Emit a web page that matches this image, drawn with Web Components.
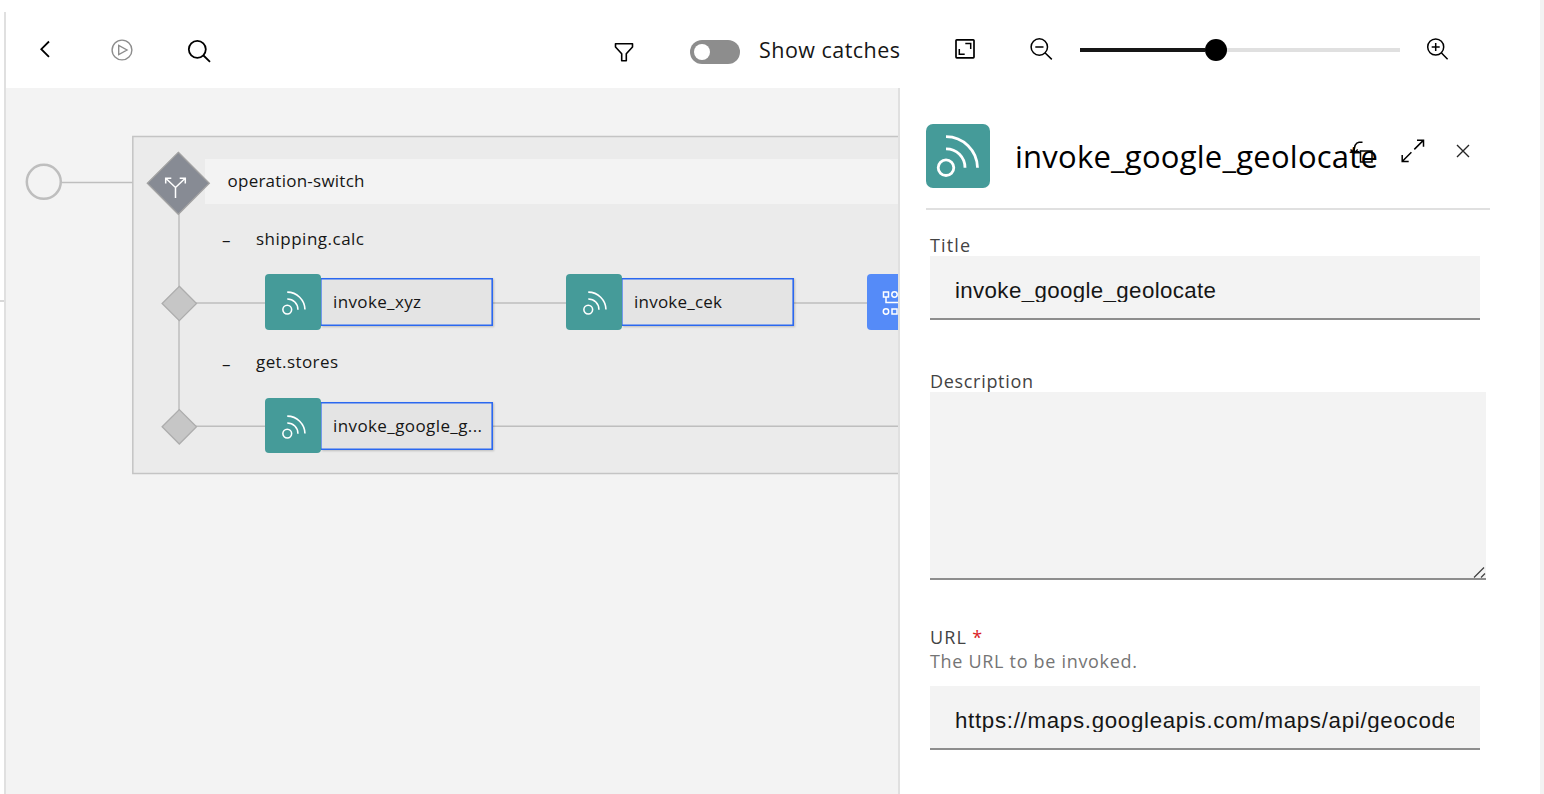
<!DOCTYPE html>
<html lang="en">
<head>
<meta charset="utf-8">
<title>Assembly editor</title>
<style>
html,body{margin:0;height:100%;background:#fff;overflow:hidden}
body{font-family:"Open Sans","Noto Sans",sans-serif;color:#161616}
</style>
</head>
<body>
<flow-editor></flow-editor>
<script>
function define(name, html, init) {
  const tpl = document.createElement('template');
  tpl.innerHTML = html;
  customElements.define(name, class extends HTMLElement {
    connectedCallback() {
      if (this.shadowRoot) return;
      this.attachShadow({ mode: 'open' }).append(tpl.content.cloneNode(true));
      if (init) init.call(this, this.shadowRoot);
    }
  });
}

// One line of text tracked so that it spans exactly `span` pixels.
define('ui-text', `<style>:host{display:block;white-space:pre}span{display:inline-block}</style><span></span>`, function (root) {
  const s = root.querySelector('span'), text = this.getAttribute('text');
  s.textContent = text;
  const target = +this.getAttribute('span');
  if (target) s.style.letterSpacing = ((target - s.getBoundingClientRect().width) / (text.length - 1)).toFixed(3) + 'px';
});

const ICONS = {
  back: ['29 34 32 32', '<path d="M49 41.5 41.3 49.2 49 56.900"/>', 1.8],
  play: ['106 34 32 32', '<circle cx="122" cy="50" r="9.900"/><path d="M118.700 45.400v9.200l8.300-4.600z"/>', 1.4],
  search: ['183 34 32 32', '<circle cx="197.300" cy="49.300" r="8.500"/><path d="M203.500 55.500l6.500 6.300"/>', 1.8],
  filter: ['608 34 32 32', '<path d="M615.500 43.700h17v3.300l-6.200 6.700v7h-4.600v-7l-6.200-6.700z" stroke-linejoin="round"/>', 1.6],
  fit: ['949 34 32 32', '<rect x="956" y="39.800" width="18" height="18" rx=".8"/><path d="M965.300 43.500h5.400v5.600M959.300 49v5.200h5.400" stroke-width="1.500"/>', 1.7],
  zoomout: ['1025 34 32 32', '<circle cx="1039.300" cy="47" r="8.200"/><path d="M1045.200 53l6.600 6.400M1035.300 47h8.200"/>', 1.5],
  zoomin: ['1421 34 32 32', '<circle cx="1435.700" cy="47" r="8"/><path d="M1441.500 53l6.100 6.200M1431.700 47h8M1435.700 43v8"/>', 1.5],
  copy: ['1346 135 32 32', '<path d="M1362.500 142.200h-3.500q-5 .5-4.800 10.300M1350.500 149.500l3.700 3.500 3.500-3.500M1355 152.800h5"/><rect x="1360.500" y="151" width="11.500" height="11"/>', 1.5],
  expand: ['1397 135 32 32', '<path d="M1417 140.200h6.500v6.500M1423.300 140.400l-9 9M1402.200 155v6.500h6.500M1402.400 161.300l9-9"/>', 1.5],
  close: ['1447 135 32 32', '<path d="M1457 145l12 12M1469 145l-12 12"/>', 1.4],
  fork: ['160 170 32 32', '<path d="M175.500 198v-10.500l-9.500-9M175.500 187.500l9.500-9M165.700 183.500v-5.200h5.600M179.700 178.300h5.600v5.200"/>', 1.5],
  invoke: ['0 0 64 64', '<circle cx="20" cy="43.700" r="7.800"/><path d="M20 24.800a18.800 18.800 0 0 1 19 19M20 12.700a31.600 31.600 0 0 1 31.500 31"/>', 2.8],
  map: ['867 274 56 56', '<rect x="883.500" y="292" width="5" height="5"/><circle cx="894.500" cy="294.500" r="2.700"/><path d="M886 297v5.500h22"/><circle cx="886" cy="311.500" r="2.700"/><rect x="892" y="309" width="5" height="5"/>', 1.5]
};
define('ui-icon', `<style>:host{display:block;width:32px;height:32px;flex:none}svg{display:block;width:100%;height:100%;fill:none;stroke:currentColor}</style><div id="b" style="height:100%"></div>`, function (root) {
  const i = ICONS[this.getAttribute('name')];
  root.getElementById('b').innerHTML = `<svg viewBox="${i[0]}" stroke-width="${i[2]}">${i[1]}</svg>`;
});

define('ui-toggle', `<style>
:host{display:block;width:50px;height:24px;border-radius:12px;background:#8d8d8d;box-sizing:border-box;padding:4px;flex:none}
i{display:block;width:16px;height:16px;border-radius:50%;background:#fff}</style><i></i>`);

define('ui-slider', `<style>
:host{display:flex;align-items:center;width:320px;height:24px;flex:none}
.a{width:125px;height:4px;background:#161616}
.k{width:22.500px;height:22.500px;border-radius:50%;background:#000;margin:0 -.500px}
.b{flex:1;height:4px;background:#e0e0e0}</style><div class="a"></div><div class="k"></div><div class="b"></div>`);

define('tool-bar', `<style>
:host{display:flex;height:88px;align-items:center;padding:12px 87px 0 23px;box-sizing:border-box;background:#fff}
ui-icon{color:#000}
.play{margin-left:45px;color:#8d8d8d}.search{margin-left:45px}
.filter{margin-left:auto}
ui-toggle{margin:4px 19px 0 50px}
ui-text{width:190px;font-size:21.500px;line-height:32px;margin-bottom:1px}
.zo{margin-left:44px}ui-slider{margin:0 21px 0 23px}
</style>
<ui-icon name="back"></ui-icon><ui-icon class="play" name="play"></ui-icon><ui-icon class="search" name="search"></ui-icon>
<ui-icon class="filter" name="filter"></ui-icon><ui-toggle></ui-toggle><ui-text text="Show catches" span="141"></ui-text>
<ui-icon name="fit"></ui-icon><ui-icon class="zo" name="zoomout"></ui-icon><ui-slider></ui-slider><ui-icon name="zoomin"></ui-icon>`);
define('flow-node', `<style>
:host{display:flex;align-items:center;width:228px;height:56px;position:absolute}
.ic{width:56px;height:55.500px;border-radius:4px;background:#459b99;color:#fff;display:flex;align-items:center;justify-content:center;flex:none}
.ic ui-icon{width:36px;height:36px;margin:2px 0 0 1.500px}
:host([kind=map]) .ic ui-icon{width:56px;height:56px;margin:0}
:host([kind=map]) .ic{background:#558bf8}
.box{flex:1;height:48px;box-sizing:border-box;border:1px solid #2b68f0;border-left:0;background:#e4e4e4;box-shadow:inset 0 0 0 .600px #2b68f0,1px 1px 2px rgba(0,0,0,.2);padding-left:12px;display:flex;align-items:center}
ui-text{font-size:17px;line-height:24px}
</style><div class="ic"></div><div class="box"></div>`, function (root) {
  const map = this.getAttribute('kind') === 'map';
  const i = document.createElement('ui-icon');
  i.setAttribute('name', map ? 'map' : 'invoke');
  root.querySelector('.ic').append(i);
  if (map) return;
  const t = document.createElement('ui-text');
  t.setAttribute('text', this.getAttribute('label'));
  t.setAttribute('span', this.getAttribute('span'));
  root.querySelector('.box').append(t);
});

define('flow-canvas', `<style>
:host{display:block;position:relative;overflow:hidden;background:#f3f3f3}
svg{position:absolute;left:0;top:0;width:892px;height:706px}
ui-text{position:absolute;font-size:17px;line-height:24px}
.fork{position:absolute;left:154px;top:82px;color:#fff}
</style>
<svg viewBox="6 88 892 706" fill="none" stroke="#bebebe" stroke-width="1.500">
<rect x="132.800" y="136.500" width="900" height="337" fill="#ebebeb" stroke="#c4c4c4"/>
<rect x="205" y="159" width="800" height="45" fill="#f3f3f3" stroke="none"/>
<circle cx="43.800" cy="181.800" r="17" stroke-width="2.500"/>
<path d="M62 182.500h70.500M179 213v214M196 303H900M196 426.200H900"/>
<path d="M178.300 152.300 209.300 183.300 178.300 214.300 147.300 183.300z" fill="#878b94" stroke="#a2a2a2" stroke-width="1.300"/>
<path d="M179.300 286.300l17.200 17.200-17.200 17.200-17.200-17.200zM179.300 409.600l17.200 17.200-17.200 17.200-17.200-17.200z" fill="#c6c6c6" stroke="#adadad" stroke-width="1.300"/>
</svg>
<ui-icon class="fork" name="fork"></ui-icon>
<ui-text style="left:221.500px;top:81px" text="operation-switch" span="137"></ui-text>
<ui-text style="left:216px;top:140px" text="–"></ui-text>
<ui-text style="left:250px;top:139px" text="shipping.calc" span="108"></ui-text>
<ui-text style="left:216px;top:264px" text="–"></ui-text>
<ui-text style="left:250px;top:262px" text="get.stores" span="82"></ui-text>
<flow-node style="left:259px;top:186px" label="invoke_xyz" span="88"></flow-node>
<flow-node style="left:560px;top:186px" label="invoke_cek" span="88"></flow-node>
<flow-node style="left:861px;top:186px" kind="map"></flow-node>
<flow-node style="left:259px;top:309.500px" label="invoke_google_g..." span="149"></flow-node>`);

define('form-field', `<style>
:host{display:block;width:550px}
.label{display:flex;gap:5px;font-size:18px;line-height:22px;height:22px;color:#434343}
.star{color:#da1e28}
.help{font-size:18px;line-height:22px;margin-top:2px;color:#757575;padding-bottom:14px}
.input{height:64px;box-sizing:border-box;border-bottom:2px solid #8d8d8d;background:#f3f3f3;padding:23px 26px 0 25px;font-family:"Liberation Sans",Arial,sans-serif;font-size:22.300px;line-height:24px;color:#161616}
.clip{overflow:hidden;height:23px}
.area{width:556px;height:188px;box-sizing:border-box;border-bottom:2px solid #8d8d8d;background:#f3f3f3;display:flex;justify-content:flex-end;align-items:flex-end}
svg{display:block}
</style><div class="label"></div>`, function (root) {
  const a = n => this.getAttribute(n);
  root.querySelector('.label').innerHTML = `<ui-text text="${a('label')}" span="${a('span')}"></ui-text>` + (this.hasAttribute('required') ? '<ui-text class="star" text="*"></ui-text>' : '');
  let rest = '';
  if (a('help')) rest += `<div class="help"><ui-text text="${a('help')}" span="207"></ui-text></div>`;
  rest += this.hasAttribute('multiline')
    ? '<div class="area"><svg width="14" height="12" viewBox="0 0 14 12" fill="none" stroke="#444" stroke-width="1.300"><path d="M2 11.500 12 1.500M9 11.500l4-4"/></svg></div>'
    : `<div class="input"><div class="clip"><ui-text text="${a('value')}" span="${a('value-span')}"></ui-text></div></div>`;
  root.querySelector('.label').insertAdjacentHTML('afterend', rest);
});

define('property-panel', `<style>
:host{display:block;background:#fff;border-left:2px solid #e0e0e0;padding:36px 50px 0 26px;box-sizing:border-box}
header{display:flex;height:84px;box-sizing:content-box;border-bottom:2px solid #e0e0e0;color:#000}
.ic{width:64px;height:64px;border-radius:7px;background:#459b99;color:#fff}
.ic ui-icon{width:64px;height:64px}
h1{font-weight:400;font-size:31px;line-height:40px;margin:12px 0 0 25px;width:331px;flex:none;color:#000}
.act{margin-top:11px}.act+.act{margin-left:19px}.act+.c{margin-left:18px;color:#262626}
.fields{padding:24px 0 0 4px;display:flex;flex-direction:column}
form-field+form-field{margin-top:50px}form-field+.url{margin-top:46px}
</style>
<header><div class="ic"><ui-icon name="invoke"></ui-icon></div><h1><ui-text text="invoke_google_geolocate" span="363"></ui-text></h1>
<ui-icon class="act" name="copy"></ui-icon><ui-icon class="act" name="expand"></ui-icon><ui-icon class="act c" name="close"></ui-icon></header>
<div class="fields">
<form-field label="Title" span="40" value="invoke_google_geolocate" value-span="261"></form-field>
<form-field label="Description" span="103" multiline></form-field>
<form-field class="url" label="URL" span="36" required help="The URL to be invoked." value="https://maps.googleapis.com/maps/api/geocode" value-span="502"></form-field>
</div>`);

define('flow-editor', `<style>
:host{display:flex;height:794px;box-sizing:border-box;padding-left:4px;background:#fff}
.edge{width:2px;margin-top:12px;background:#e0e0e0;flex:none}
main{width:1534px;display:grid;grid-template:88px 706px/892px 642px;flex:none}
tool-bar{grid-column:1/3}
.scroll{width:4px;background:#f3f3f3;flex:none}
.tick{position:absolute;left:0;top:300px;width:4px;height:1.500px;background:#d8d8d8}
</style><i class="tick"></i><div class="edge"></div><main><tool-bar></tool-bar><flow-canvas></flow-canvas><property-panel></property-panel></main><div class="scroll"></div>`);
</script>
</body>
</html>
